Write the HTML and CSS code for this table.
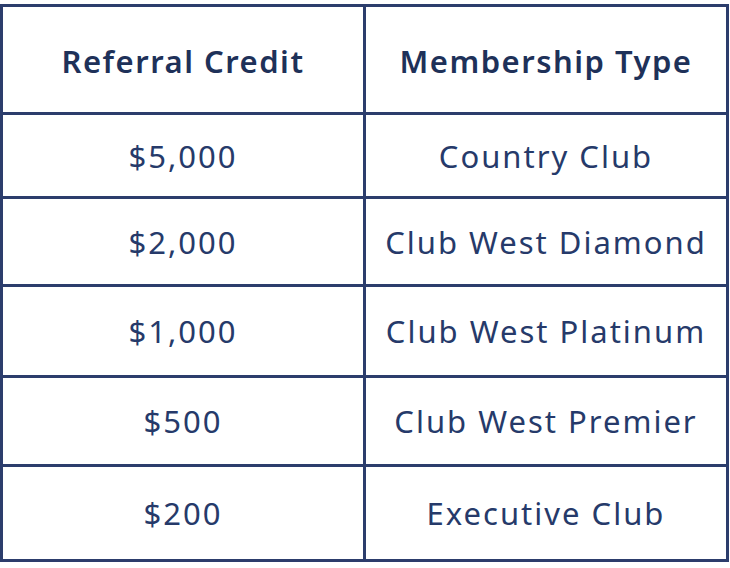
FILE: index.html
```html
<!DOCTYPE html>
<html>
<head>
<meta charset="utf-8">
<link rel="stylesheet" href="styles.css">
</head>
<body>
<div class="table">
  <div class="cell head r-head">Referral Credit</div>
  <div class="cell head r-head last-col">Membership Type</div>
  <div class="cell r1">$5,000</div>
  <div class="cell r1 last-col">Country Club</div>
  <div class="cell r2">$2,000</div>
  <div class="cell r2 last-col">Club West Diamond</div>
  <div class="cell r3">$1,000</div>
  <div class="cell r3 last-col">Club West Platinum</div>
  <div class="cell r4">$500</div>
  <div class="cell r4 last-col">Club West Premier</div>
  <div class="cell r5 last-row">$200</div>
  <div class="cell r5 last-row last-col">Executive Club</div>
</div>
</body>
</html>
```
FILE: styles.css
```css
html, body {
  margin: 0;
  padding: 0;
  background: #ffffff;
}
body {
  padding-top: 4px;
  font-family: "Noto Sans", "Open Sans", sans-serif;
}
.table {
  box-sizing: border-box;
  width: 729px;
  height: 558px;
  border: 3px solid #2c3d6c;
  display: grid;
  grid-template-columns: 363px 360px;
  grid-template-rows: 108px 84px 88px 91px 89px 92px;
}
.cell {
  box-sizing: border-box;
  display: flex;
  align-items: center;
  justify-content: center;
  border-right: 3px solid #2c3d6c;
  border-bottom: 3px solid #2c3d6c;
  color: #263a6a;
  font-size: 31px;
  font-weight: 400;
  letter-spacing: 2px;
  white-space: nowrap;
}
.head {
  font-weight: 600;
  font-size: 31px;
  letter-spacing: 1.5px;
  padding-top: 3px;
  color: #1e3159;
}
.last-col {
  border-right: none;
}
.last-row {
  border-bottom: none;
}
```
